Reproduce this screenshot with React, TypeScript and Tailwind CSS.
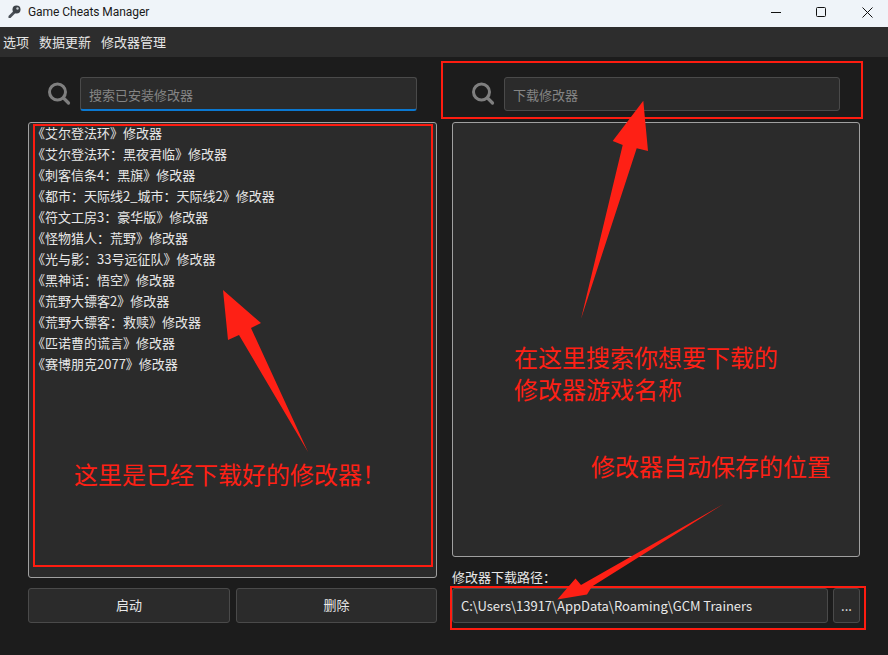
import React from 'react';

const trainers = [
  '《艾尔登法环》修改器',
  '《艾尔登法环：黑夜君临》修改器',
  '《刺客信条4：黑旗》修改器',
  '《都市：天际线2_城市：天际线2》修改器',
  '《符文工房3：豪华版》修改器',
  '《怪物猎人：荒野》修改器',
  '《光与影：33号远征队》修改器',
  '《黑神话：悟空》修改器',
  '《荒野大镖客2》修改器',
  '《荒野大镖客：救赎》修改器',
  '《匹诺曹的谎言》修改器',
  '《赛博朋克2077》修改器',
];

const KeyIcon = () => (
  <svg width="14" height="14" viewBox="0 0 14 14" className="shrink-0">
    <path d="M0.5 13 L0.5 11 L6 5.5 L8 7.5 L2.5 13 Z" fill="#4a5058" />
    <circle cx="8.5" cy="4.5" r="4" fill="#3c4248" />
    <circle cx="9.5" cy="3.5" r="1.2" fill="#c8cdd2" />
  </svg>
);

const SearchIcon = () => (
  <svg width="24" height="24" viewBox="0 0 24 24" className="shrink-0" fill="none" stroke="#7f7f7f">
    <circle cx="10.5" cy="10" r="8" strokeWidth="3" />
    <path d="M16.5 16 L21.5 21" strokeWidth="3.2" strokeLinecap="round" />
  </svg>
);

const App: React.FC = () => {
  return (
    <div className="relative w-[888px] h-[655px] overflow-hidden flex flex-col bg-[#1c1c1c] font-['Noto_Sans_CJK_SC','Noto_Sans',sans-serif]">
      {/* title bar */}
      <div className="h-[27px] flex items-center bg-[#eff4f9] text-[#1a1a1a] text-[12px] pl-2 pb-[3px]">
        <KeyIcon />
        <span className="ml-[6px] tracking-[-0.05px] font-['Roboto','Noto_Sans',sans-serif]">Game Cheats Manager</span>
        <div className="ml-auto flex items-center gap-[35px] pr-[15px]">
          <svg width="10" height="10" viewBox="0 0 10 10" stroke="#111" strokeWidth="1"><path d="M0 5.5 H10" /></svg>
          <svg width="10" height="10" viewBox="0 0 10 10" fill="none" stroke="#111" strokeWidth="1"><rect x="0.5" y="0.5" width="9" height="9" rx="1" /></svg>
          <svg width="11" height="11" viewBox="0 0 11 11" stroke="#111" strokeWidth="1" className="ml-[1px]"><path d="M0.5 0.5 L10.5 10.5 M10.5 0.5 L0.5 10.5" /></svg>
        </div>
      </div>

      {/* menu */}
      <div className="h-[30px] flex items-center bg-[#2d2d2d] text-[#e6e6e6] text-[13px] pl-[3px] gap-[10px]">
        <span>选项</span>
        <span>数据更新</span>
        <span>修改器管理</span>
      </div>

      <div className="flex px-[28px] gap-[15px] pt-[20px]">
        {/* left column */}
        <div className="w-[409px] flex flex-col">
          <div className="flex items-center h-[34px] pl-[19px] gap-[9px]">
            <SearchIcon />
            <div className="w-[337px] h-[34px] flex items-center px-[8px] pt-[2px] text-[13px] text-[#858585] bg-[#2b2b2b] border border-[#4a4a4a] border-b-2 border-b-[#0b78d0] rounded-[3px]">
              搜索已安装修改器
            </div>
          </div>
          <div className="mt-[11px] h-[456px] overflow-hidden bg-[#2b2b2b] border border-[#a0a0a0] rounded-[3px] pl-[3px] text-[13px] text-[#e8e8e8]">
            <div>
              {trainers.map(t => (
                <div key={t} className="h-[21px] leading-[20px] whitespace-nowrap">{t}</div>
              ))}
            </div>
          </div>
          <div className="mt-[10px] flex gap-[6px] text-[13px] text-[#e8e8e8]">
            <div className="w-[202px] h-[35px] flex items-center justify-center pb-[1px] bg-[#2b2b2b] border border-[#4a4a4a] rounded-[3px]">启动</div>
            <div className="w-[201px] h-[35px] flex items-center justify-center pb-[1px] bg-[#2b2b2b] border border-[#4a4a4a] rounded-[3px]">删除</div>
          </div>
        </div>

        {/* right column */}
        <div className="w-[408px] flex flex-col">
          <div className="flex items-center h-[34px] pl-[19px] gap-[9px]">
            <SearchIcon />
            <div className="w-[336px] h-[34px] flex items-center px-[8px] pt-[1px] text-[13px] text-[#858585] bg-[#2b2b2b] border border-[#4a4a4a] rounded-[3px]">
              下载修改器
            </div>
          </div>
          <div className="mt-[11px] h-[435px] bg-[#2b2b2b] border border-[#a0a0a0] rounded-[3px]" />
          <div className="mt-[10px] h-[21px] leading-[19px] text-[13px] text-[#e8e8e8]">修改器下载路径：</div>
          <div className="flex gap-[5px] text-[13px] text-[#e8e8e8]">
            <div className="w-[376px] h-[35px] flex items-center px-[8px] tracking-[-0.03px] bg-[#2b2b2b] border border-[#4a4a4a] rounded-[3px]">
              C:\Users\13917\AppData\Roaming\GCM Trainers
            </div>
            <div className="w-[27px] h-[35px] flex items-center justify-center bg-[#2b2b2b] border border-[#4a4a4a] rounded-[3px]">...</div>
          </div>
        </div>
      </div>

      {/* red annotations over the window */}
      <div className="absolute left-[33px] top-[124px] w-[400px] h-[443px] border-[2px] border-[#fe1c10]" />
      <div className="absolute left-[441px] top-[61px] w-[422px] h-[58px] border-[2px] border-[#fe1c10]" />
      <div className="absolute left-[450px] top-[586px] w-[416px] h-[44px] border-[2px] border-[#fe1c10]" />
      <svg className="absolute left-0 top-0 pointer-events-none" width="888" height="655">
        <polygon points="223,290 261,323 251,328 308,452 239,335 228,340" fill="#fe2015" />
        <polygon points="643.3,100.7 648,151 636.7,148.3 581,319 622.7,145 612.7,141" fill="#fe2015" />
        <polygon points="557.3,599.5 575.5,578.5 581,585 723.5,504 592,586.5 587,594.5" fill="#fe2015" />
      </svg>
      <div className="absolute left-[74px] top-[457px] text-[24px] leading-[34px] text-[#fe2015] whitespace-nowrap">这里是已经下载好的修改器！</div>
      <div className="absolute left-[514px] top-[341px] text-[24px] leading-[32px] text-[#fe2015] whitespace-nowrap">在这里搜索你想要下载的<br />修改器游戏名称</div>
      <div className="absolute left-[591px] top-[450px] text-[24px] leading-[32px] text-[#fe2015] whitespace-nowrap">修改器自动保存的位置</div>
    </div>
  );
};

export default App;
